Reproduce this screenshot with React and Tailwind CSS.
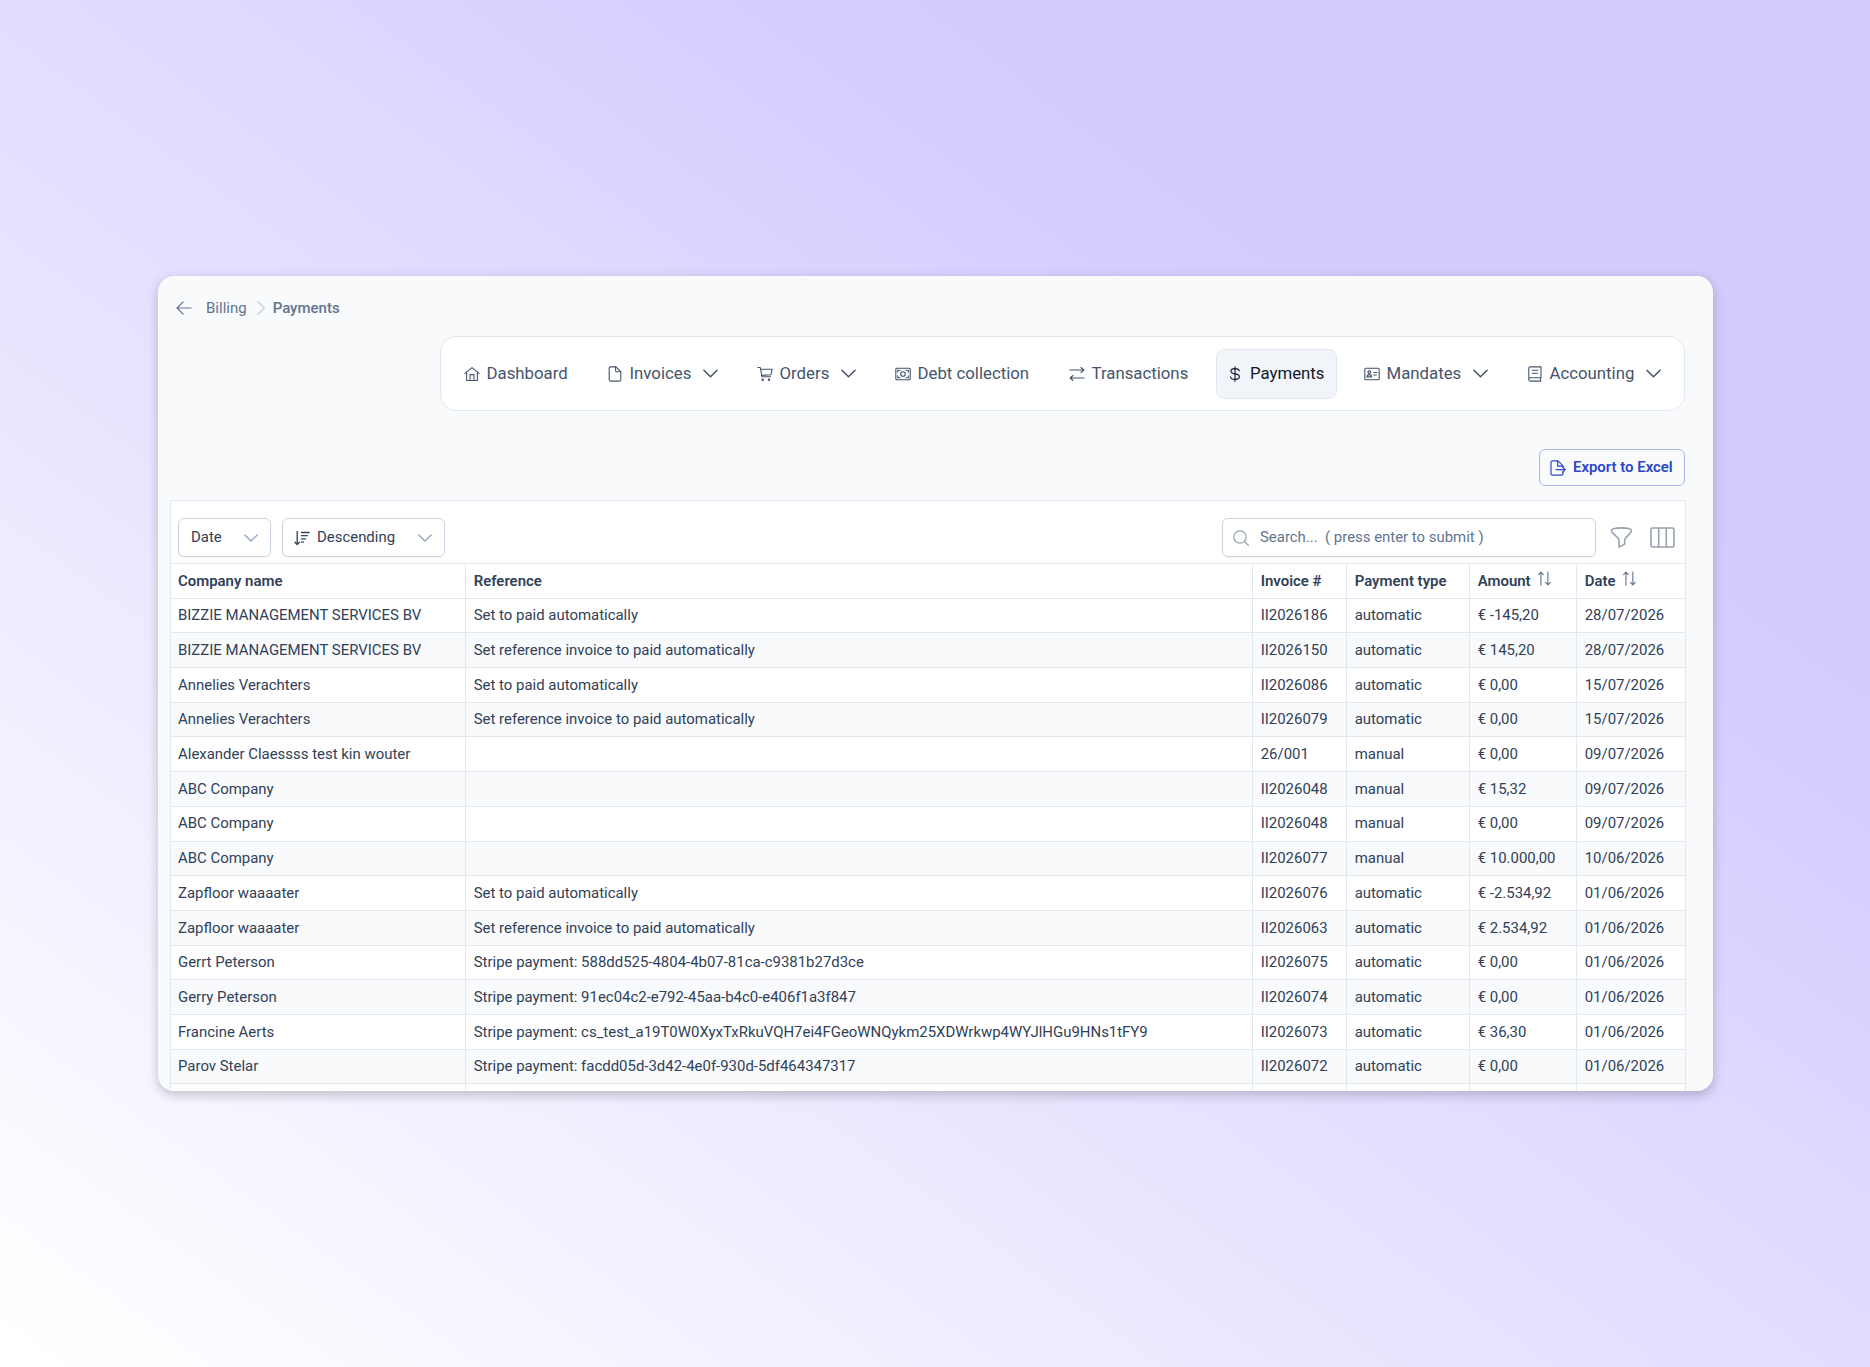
import React from 'react';

// Shared svg wrapper for all line icons
const Svg = ({ className = '', size = 16, sw = 1.1, children }) => (
  <svg
    className={`shrink-0 ${className}`}
    width={size}
    height={size}
    viewBox="0 0 16 16"
    fill="none"
    stroke="currentColor"
    strokeWidth={sw}
    strokeLinecap="round"
    strokeLinejoin="round"
  >
    {children}
  </svg>
);

const icons = {
  home: (
    <>
      <path d="M.8 7.4 8 1.6l7.2 5.8" />
      <path d="M2.6 6.2v8.3h10.8V6.2" />
      <path d="M6 14.3V8.6h4v5.7" />
    </>
  ),
  file: (
    <>
      <path d="M9 .9H3.6c-.8 0-1.4.6-1.4 1.4v11.4c0 .8.6 1.4 1.4 1.4h8.8c.8 0 1.4-.6 1.4-1.4V5.6z" />
      <path d="M8.6 1v3.7c0 .7.4 1.1 1.1 1.1h3.9" />
    </>
  ),
  cart: (
    <>
      <path d="M.8 1.5h2.5l1.7 9.3h8.6" />
      <path d="M3.6 3.3h11.5l-1.1 5.4-9.4.7" />
      <circle cx="5.6" cy="13.8" r=".7" fill="currentColor" />
      <circle cx="12" cy="13.8" r=".7" fill="currentColor" />
    </>
  ),
  cash: (
    <>
      <rect x=".8" y="2.2" width="14.4" height="11.6" rx="1" />
      <circle cx="8" cy="8" r="2.3" />
      <path d="M2.7 6.2V4.2H5M13.3 6.2V4.2H11M2.7 9.8v2H5M13.3 9.8v2H11" />
    </>
  ),
  transfer: (
    <>
      <path d="M.9 4h14M12 1.5 14.9 4 12 6.5" />
      <path d="M15.1 12h-14M4 9.5 1.1 12 4 14.5" />
    </>
  ),
  dollar: (
    <>
      <path d="M8 .8v14.4" />
      <path d="M12.2 4.9C12 3.4 10.6 2.6 8.2 2.6c-2.6 0-4.3.9-4.3 2.6 0 3.9 8.5 1.5 8.5 5.4 0 1.8-1.7 2.8-4.3 2.8-2.7 0-4.3-1-4.5-2.7" />
    </>
  ),
  idCard: (
    <>
      <rect x=".8" y="2.2" width="14.4" height="11.6" rx="1" />
      <circle cx="5.3" cy="6.2" r="1.3" />
      <path d="M2.9 10.9c.2-1.6 1.1-2.3 2.4-2.3s2.2.7 2.4 2.3zM9.7 6.5h3.2M9.7 9h2.6" />
    </>
  ),
  book: (
    <>
      <path d="M14 11.8V.9H3.3C2.4.9 1.8 1.5 1.8 2.4v11.2c0 .9.6 1.5 1.5 1.5H14M14 11.8H3.3c-.9 0-1.5.6-1.5 1.5M13.5 11.8v3.2" />
      <path d="M5.2 4.3h5.6M5.2 7.3h5.6" />
    </>
  ),
};

const Chevron = ({ className = '', size = 14, sw = 1.6 }) => (
  <Svg className={className} size={size} sw={sw}>
    <path d="M1 4.5 8 11.5l7-7" />
  </Svg>
);

const SortIcon = () => (
  <Svg className="text-slate-500" size={15} sw={1.2}>
    <path d="M4.2 15V1.2M1.7 3.8l2.5-2.6 2.5 2.6" />
    <path d="M11.6 1v13.8M9.1 12.2l2.5 2.6 2.5-2.6" />
  </Svg>
);

const navItems = [
  { label: 'Dashboard', icon: 'home', width: 'w-[143px]' },
  { label: 'Invoices', icon: 'file', menu: true, width: 'w-[150px]' },
  { label: 'Orders', icon: 'cart', menu: true, width: 'w-[138px]' },
  { label: 'Debt collection', icon: 'cash', width: 'w-[174px]' },
  { label: 'Transactions', icon: 'transfer', width: 'w-[160px]' },
  { label: 'Payments', icon: 'dollar', active: true, width: 'w-[135px]' },
  { label: 'Mandates', icon: 'idCard', menu: true, width: 'w-[163px]' },
  { label: 'Accounting', icon: 'book', menu: true, width: 'w-[133px]' },
];

const AUTO = 'Set to paid automatically';
const AUTO_REF = 'Set reference invoice to paid automatically';

const rows = [
  ['BIZZIE MANAGEMENT SERVICES BV', AUTO, 'II2026186', 'automatic', '€ -145,20', '28/07/2026'],
  ['BIZZIE MANAGEMENT SERVICES BV', AUTO_REF, 'II2026150', 'automatic', '€ 145,20', '28/07/2026'],
  ['Annelies Verachters', AUTO, 'II2026086', 'automatic', '€ 0,00', '15/07/2026'],
  ['Annelies Verachters', AUTO_REF, 'II2026079', 'automatic', '€ 0,00', '15/07/2026'],
  ['Alexander Claessss test kin wouter', '', '26/001', 'manual', '€ 0,00', '09/07/2026'],
  ['ABC Company', '', 'II2026048', 'manual', '€ 15,32', '09/07/2026'],
  ['ABC Company', '', 'II2026048', 'manual', '€ 0,00', '09/07/2026'],
  ['ABC Company', '', 'II2026077', 'manual', '€ 10.000,00', '10/06/2026'],
  ['Zapfloor waaaater', AUTO, 'II2026076', 'automatic', '€ -2.534,92', '01/06/2026'],
  ['Zapfloor waaaater', AUTO_REF, 'II2026063', 'automatic', '€ 2.534,92', '01/06/2026'],
  ['Gerrt Peterson', 'Stripe payment: 588dd525-4804-4b07-81ca-c9381b27d3ce', 'II2026075', 'automatic', '€ 0,00', '01/06/2026'],
  ['Gerry Peterson', 'Stripe payment: 91ec04c2-e792-45aa-b4c0-e406f1a3f847', 'II2026074', 'automatic', '€ 0,00', '01/06/2026'],
  ['Francine Aerts', 'Stripe payment: cs_test_a19T0W0XyxTxRkuVQH7ei4FGeoWNQykm25XDWrkwp4WYJlHGu9HNs1tFY9', 'II2026073', 'automatic', '€ 36,30', '01/06/2026'],
  ['Parov Stelar', 'Stripe payment: facdd05d-3d42-4e0f-930d-5df464347317', 'II2026072', 'automatic', '€ 0,00', '01/06/2026'],
  ['', '', '', '', '', ''],
];

const headers = [
  { label: 'Company name' },
  { label: 'Reference' },
  { label: 'Invoice #' },
  { label: 'Payment type' },
  { label: 'Amount', sort: true },
  { label: 'Date', sort: true },
];

const GRID = 'grid grid-cols-[294px_787px_94px_123px_107px_1fr]';

const Breadcrumb = () => (
  <div className="flex h-5 items-center pl-[18px] text-[15px] text-slate-500">
    <Svg size={16} sw={1.2}>
      <path d="M15.2 8H1.2M7.2 1.8 1 8l6.2 6.2" />
    </Svg>
    <span className="ml-[14px]">Billing</span>
    <Svg className="ml-[6px] text-slate-300" size={16} sw={1.5}>
      <path d="m4.8 1.5 6.5 6.5-6.5 6.5" />
    </Svg>
    <span className="ml-1 font-medium">Payments</span>
  </div>
);

const Nav = () => (
  <nav className="ml-[282px] mt-[18px] flex h-[75px] w-[1245px] items-center rounded-2xl border border-slate-200 bg-white pl-[10px]">
    {navItems.map((item) => (
      <div key={item.label} className={`${item.width} flex shrink-0`}>
        <div
          className={`flex h-[50px] items-center whitespace-nowrap rounded-lg border text-[16.8px] ${
            item.active ? 'w-[121px] border-slate-200 bg-slate-100 px-[10px] text-slate-900' : 'border-transparent px-3 text-slate-600'
          }`}
        >
          <Svg size={16}>{icons[item.icon]}</Svg>
          <span className={item.active ? 'ml-[7px]' : 'ml-[6.5px]'}>{item.label}</span>
          {item.menu && <Chevron className="ml-3" size={15} />}
        </div>
      </div>
    ))}
  </nav>
);

const Toolbar = () => (
  <div className="flex h-[62px] items-start pl-[7px] pr-[10px] pt-[17px] text-[14.93px] text-slate-700">
    <button className="flex h-[39px] w-[93px] items-center justify-between rounded-md border border-slate-300 px-3 shadow-xs">
      Date
      <Chevron className="text-slate-400" sw={1.5} />
    </button>
    <button className="ml-[11px] flex h-[39px] w-[163px] items-center rounded-md border border-slate-300 pl-[11px] pr-3 shadow-xs">
      <Svg size={16} sw={1.3}>
        <path d="M3.2 1.5v13M1 12.2l2.2 2.3 2.2-2.3M7.5 2.5H15M7.5 5.7h5.8M7.5 8.9h4M7.5 12.1h2" />
      </Svg>
      <span className="ml-[7px]">Descending</span>
      <Chevron className="ml-auto text-slate-400" sw={1.5} />
    </button>
    <div className="ml-auto flex h-[39px] w-[374px] items-center rounded-md border border-slate-300 px-[10px] text-slate-500 shadow-xs">
      <Svg className="text-slate-400" size={16} sw={1.2}>
        <circle cx="7" cy="7" r="6.2" />
        <path d="m11.5 11.5 4 4" />
      </Svg>
      <span className="ml-[11px] whitespace-pre">Search...  ( press enter to submit )</span>
    </div>
    <Svg className="ml-[14px] mt-2 text-gray-400" size={23} sw={1.1}>
      <path d="M1 3.2C1 2 4 1.3 8 1.3s7 .7 7 1.9c0 2.4-4.8 4.3-4.8 6.8v2.6L6.3 14.7V10C6.3 7.5 1 5.6 1 3.2z" />
    </Svg>
    <svg className="ml-[17px] mt-[9px] shrink-0 text-gray-400" width="25" height="21" viewBox="0 0 25 21" fill="none" stroke="currentColor" strokeWidth="1.6">
      <rect x="1" y="1" width="23" height="19" rx="1.5" />
      <path d="M8.7 1v19M16.3 1v19" />
    </svg>
  </div>
);

const Table = () => (
  <div className="ml-3 mt-[14px] w-[1516px] border border-slate-200 bg-white text-[14.95px] text-slate-700">
    <Toolbar />
    <div className={`${GRID} h-[34.7px] border-t border-slate-200 font-semibold`}>
      {headers.map((h, i) => (
        <div key={h.label} className={`flex items-center ${i > 0 ? 'border-l border-slate-200 pl-[7.7px]' : 'pl-[7px]'}`}>
          {h.label}
          {h.sort && (
            <span className="mb-1 ml-1.5">
              <SortIcon />
            </span>
          )}
        </div>
      ))}
    </div>
    {rows.map((row, r) => (
      <div key={r} className={`${GRID} h-[34.7px] border-t border-slate-200 ${r % 2 ? 'bg-slate-50' : ''}`}>
        {row.map((cell, i) => (
          <div key={i} className={`flex items-center whitespace-nowrap ${i > 0 ? 'border-l border-slate-200 pl-[7.7px]' : 'pl-[7px]'}`}>
            {cell}
          </div>
        ))}
      </div>
    ))}
  </div>
);

function App() {
  return (
    <div className="h-[1367px] w-[1870px] overflow-hidden bg-[linear-gradient(to_top_right,#ffffff_0%,#ffffff_1%,#d6cdff_71%,#d2cbfb_77%)] pl-[158px] pt-[276px] font-['Roboto',sans-serif]">
      <div className="h-[815px] w-[1555px] overflow-hidden rounded-2xl bg-slate-50 pt-[22px] shadow-[0_4px_12px_rgba(0,0,0,0.22)]">
        <Breadcrumb />
        <Nav />
        <div className="mt-[38px] flex pl-[1381px]">
          <button className="flex h-[37px] w-[146px] items-center rounded-md border border-[#a9b7ee] pl-[10px] text-[14.93px] font-semibold text-[#2c48c6]">
            <Svg size={16} sw={1.2}>
              <path d="M13 11.5V13.7c0 .8-.6 1.4-1.4 1.4H2.4c-.8 0-1.4-.6-1.4-1.4V2.3C1 1.5 1.6.9 2.4.9H8l5 5v1" />
              <path d="M7.7 1v5.2H13M6 9.7h9.3M12.6 7l2.7 2.7-2.7 2.7" />
            </Svg>
            <span className="ml-[7px]">Export to Excel</span>
          </button>
        </div>
        <Table />
      </div>
    </div>
  );
}

export default App;
